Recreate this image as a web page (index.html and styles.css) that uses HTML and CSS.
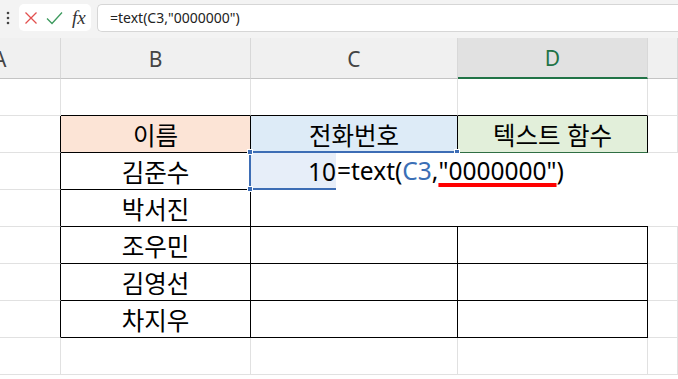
FILE: index.html
```html
<!DOCTYPE html>
<html lang="ko">

<head>
    <meta charset="utf-8">
    <title>Sheet - text function</title>
    <link rel="stylesheet" href="styles.css">
</head>

<body>
    <div class="toolbar">
        <span class="grip">
            <svg width="4" height="14" viewBox="0 0 4 14"><circle cx="2" cy="2" r="1.3"/><circle cx="2" cy="7" r="1.3"/><circle cx="2" cy="12" r="1.3"/></svg>
        </span>
        <div class="fn-box">
            <svg class="ico" width="14" height="14" viewBox="0 0 14 14"><path d="M1.5 1.5 L12.5 12.5 M12.5 1.5 L1.5 12.5" stroke="#e2504f" stroke-width="1.3" fill="none"/></svg>
            <svg class="ico" width="17" height="14" viewBox="0 0 17 14"><path d="M1 7.5 L6 12.5 L16 1.5" stroke="#3d9a5e" stroke-width="1.3" fill="none"/></svg>
            <span class="fx">fx</span>
        </div>
        <div class="formula">=text(C3,"0000000")</div>
    </div>

    <div class="sheet">
        <div class="grid">
            <!-- column headers -->
            <div class="c hd hd-a"><span>A</span></div>
            <div class="c hd">B</div>
            <div class="c hd">C</div>
            <div class="c hd active">D</div>
            <div class="c hd"></div>

            <!-- row 1 -->
            <div class="c"></div>
            <div class="c tb"></div>
            <div class="c tb"></div>
            <div class="c tb"></div>
            <div class="c"></div>

            <!-- row 2 -->
            <div class="c tr"></div>
            <div class="c t peach">이름</div>
            <div class="c t blue">전화번호</div>
            <div class="c t green">텍스트 함수</div>
            <div class="c"></div>

            <!-- row 3 -->
            <div class="c tr"></div>
            <div class="c t">김준수</div>
            <div class="c t sel">10</div>
            <div class="c t"></div>
            <div class="c"></div>

            <!-- row 4 -->
            <div class="c tr"></div>
            <div class="c t">박서진</div>
            <div class="c t"></div>
            <div class="c t"></div>
            <div class="c"></div>

            <!-- row 5 -->
            <div class="c tr"></div>
            <div class="c t">조우민</div>
            <div class="c t"></div>
            <div class="c t"></div>
            <div class="c"></div>

            <!-- row 6 -->
            <div class="c tr"></div>
            <div class="c t">김영선</div>
            <div class="c t"></div>
            <div class="c t"></div>
            <div class="c"></div>

            <!-- row 7 -->
            <div class="c tr"></div>
            <div class="c t">차지우</div>
            <div class="c t"></div>
            <div class="c t"></div>
            <div class="c"></div>

            <!-- row 8 -->
            <div class="c"></div>
            <div class="c"></div>
            <div class="c"></div>
            <div class="c"></div>
            <div class="c"></div>
        </div>

        <!-- selected cell C3 -->
        <div class="selection">
            <i class="handle h-tl"></i>
            <i class="handle h-bl"></i>
            <i class="handle h-tr"></i>
        </div>

        <!-- in-cell editor -->
        <div class="editor">=text(<span class="ref">C3</span>,<span class="mark">"0000000"</span>)</div>
    </div>
</body>

</html>
```

FILE: styles.css
```css
body {
    margin: 0;
    padding: 0;
    width: 678px;
    height: 379px;
    overflow: hidden;
    background-color: white;
    font-family: "Noto Sans", "Noto Sans CJK KR", sans-serif;
}

/* formula bar */
.toolbar {
    height: 38px;
    box-sizing: border-box;
    padding-top: 4px;
    background-color: #f3f3f3;
    display: flex;
    align-items: flex-start;
}

.grip {
    width: 16px;
    height: 27px;
    display: flex;
    align-items: center;
    justify-content: center;
    fill: #444;
}

.fn-box {
    margin-left: 3px;
    width: 72px;
    height: 27px;
    box-sizing: border-box;
    background-color: white;
    border-radius: 5px;
    display: flex;
    align-items: center;
    padding-left: 5px;
    gap: 8px;
}

.fx {
    font-family: "Liberation Serif", serif;
    font-style: italic;
    font-size: 19px;
    color: #333;
    margin-left: 1px;
    line-height: 1;
}

.formula {
    flex: 1;
    margin-left: 6px;
    height: 28px;
    box-sizing: border-box;
    background-color: white;
    border: 1px solid #d6d6d6;
    border-right: none;
    border-radius: 5px 0 0 5px;
    padding-left: 12px;
    font-size: 14px;
    line-height: 26px;
    color: #222;
}

/* worksheet */
.sheet {
    position: relative;
}

.grid {
    display: grid;
    grid-template-columns: 61px 190px 207px 190px 1fr;
    grid-template-rows: 41px repeat(8, 37px);
}

.c {
    box-sizing: border-box;
    border-right: 1px solid #e1e1e1;
    border-bottom: 1px solid #e1e1e1;
    display: flex;
    align-items: center;
    justify-content: center;
    font-size: 24.5px;
    color: #000;
}

.hd {
    background-color: #f0f0f0;
    border-right-color: #d8d8d8;
    border-bottom-color: #c4c4c4;
    font-size: 21px;
    color: #444;
    padding-top: 1px;
}

.hd-a {
    justify-content: flex-start;
}

.hd-a span {
    margin-left: -7px;
}

.hd.active {
    background-color: #e1e1e1;
    color: #217346;
    border-bottom: 2px solid #217346;
}

/* table borders */
.tb {
    border-bottom-color: #000;
}

.tr {
    border-right-color: #000;
}

.t {
    border-right-color: #000;
    border-bottom-color: #000;
}

.peach {
    background-color: #fce4d6;
}

.blue {
    background-color: #ddebf7;
}

.green {
    background-color: #e2efda;
    border-bottom-color: #2f6e43;
}

.sel {
    background-color: #e7eef9;
    justify-content: flex-end;
    padding-right: 121px;
}

.selection {
    position: absolute;
    left: 249px;
    top: 113px;
    width: 209px;
    height: 39px;
    box-sizing: border-box;
    border: 2px solid #3d6db5;
}

.handle {
    position: absolute;
    width: 6px;
    height: 6px;
    background-color: #3d6db5;
    border: 1px solid white;
    box-sizing: border-box;
}

.h-tl {
    left: -4px;
    top: -4px;
}

.h-bl {
    left: -4px;
    bottom: -4px;
}

.h-tr {
    right: -4px;
    top: -4px;
}

.editor {
    position: absolute;
    left: 336px;
    top: 115px;
    right: 0;
    height: 73px;
    background-color: white;
    padding-left: 1px;
    font-size: 24.5px;
    line-height: 36px;
    color: #000;
    white-space: nowrap;
}

.ref {
    color: #3b6fb6;
}

.mark {
    text-decoration: underline;
    text-decoration-color: #ff0000;
    text-decoration-thickness: 4px;
    text-underline-offset: 3px;
}
```
